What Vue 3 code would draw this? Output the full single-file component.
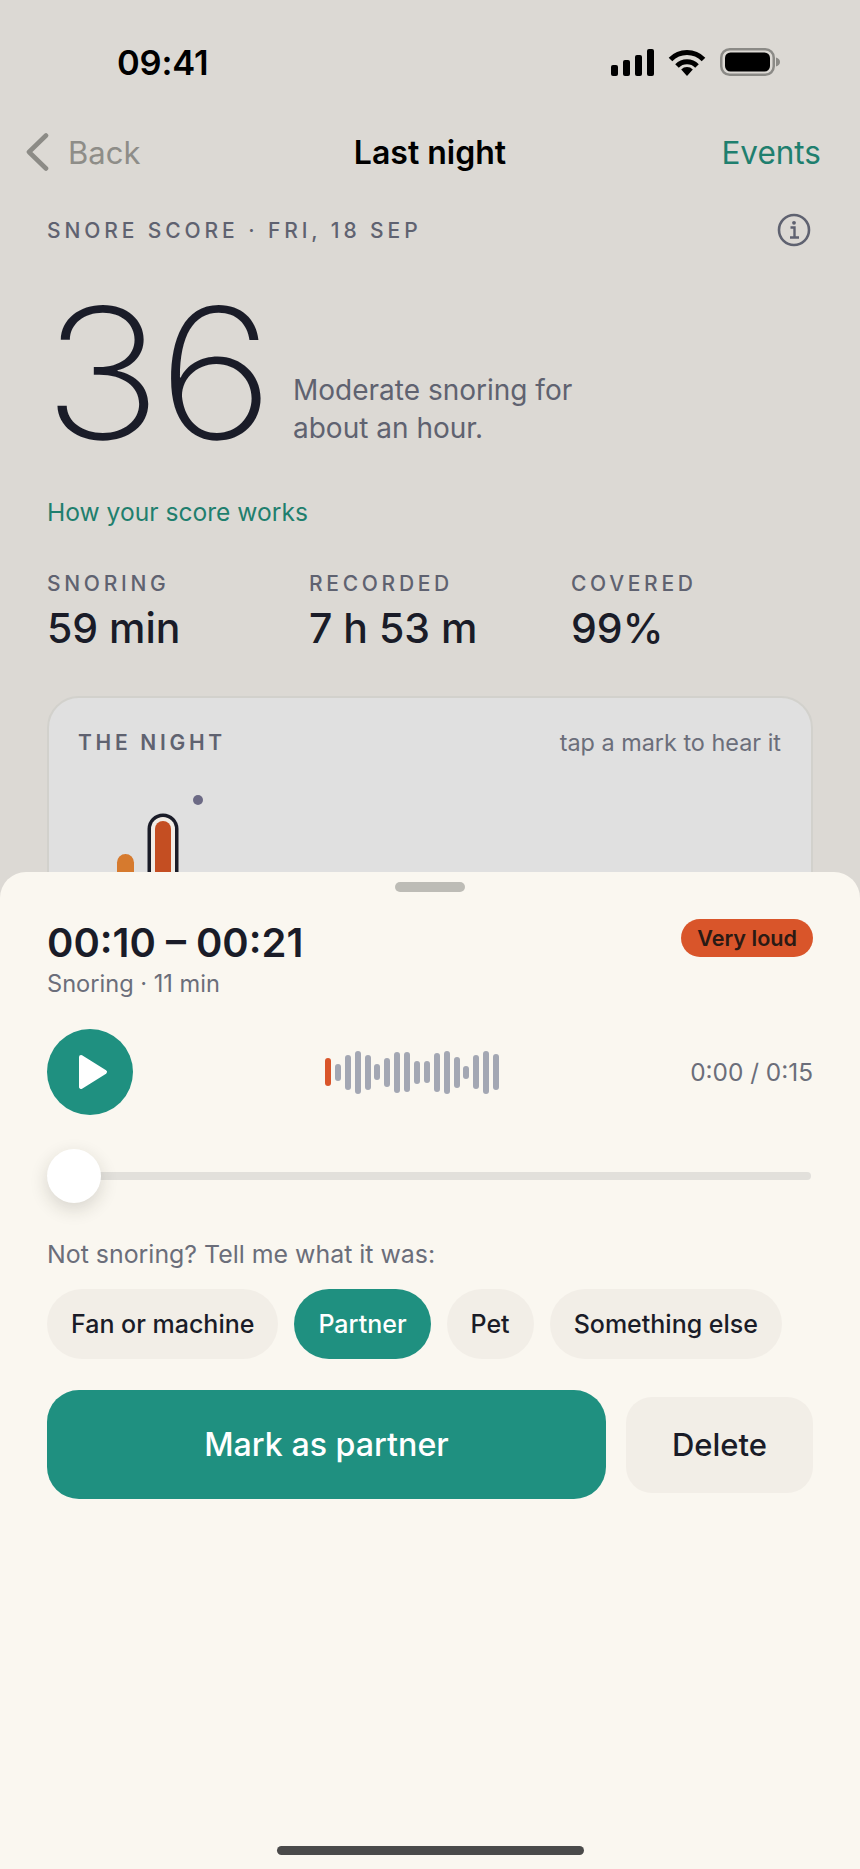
<script setup>
const stats = [
  { label: 'SNORING', value: '59 min' },
  { label: 'RECORDED', value: '7 h 53 m' },
  { label: 'COVERED', value: '99%' }
]

const signal = [11, 16, 21, 27]

// marks on the night timeline, in px from the chart's top-left corner
const marks = [
  { id: 'a', kind: 'bar-medium', left: 39, top: 44, width: 17, height: 90 },
  { id: 'b', kind: 'bar-loud', left: 77, top: 11, width: 16, height: 120 }
]

const wave = [28, 17, 35, 43, 35, 16, 29, 41, 40, 23, 22, 39, 43, 31, 13, 34, 43, 36]

const chips = [
  { label: 'Fan or machine' },
  { label: 'Partner', active: true },
  { label: 'Pet' },
  { label: 'Something else' }
]
</script>

<template>
  <div class="page">
    <div class="status">
      <span class="clock">09:41</span>
      <div class="status-icons">
        <div class="signal">
          <i v-for="h in signal" :key="h" :style="{ height: h + 'px' }"></i>
        </div>
        <svg width="38" height="27" viewBox="0 0 38 27" fill="none">
          <path d="M2.5 10.5A23 23 0 0 1 35.5 10.5" stroke="#000" stroke-width="5" />
          <path d="M9 17A14 14 0 0 1 29 17" stroke="#000" stroke-width="5" />
          <path d="M13.2 20.5A8 8 0 0 1 24.8 20.5L19 27Z" fill="#000" />
        </svg>
        <svg width="60" height="28" viewBox="0 0 60 28" fill="none">
          <rect x="1.25" y="1.25" width="52.5" height="25.5" rx="8.5" stroke="#8b8a86" stroke-width="2.5" />
          <rect x="5" y="4.5" width="45" height="19" rx="5.5" fill="#000" />
          <path d="M56 9.5C58.5 10.3 60 12 60 14S58.5 17.7 56 18.5Z" fill="#8b8a86" />
        </svg>
      </div>
    </div>

    <div class="nav">
      <div class="nav-back">
        <svg width="24" height="38" viewBox="0 0 24 38" fill="none">
          <path d="M21 2.5L4 19L21 35.5" stroke="#8c8b86" stroke-width="4.6" stroke-linecap="round" stroke-linejoin="round" />
        </svg>
        <span>Back</span>
      </div>
      <div class="nav-title">Last night</div>
      <div class="nav-action">Events</div>
    </div>

    <div class="content">
      <div class="eyebrow-row">
        <span class="eyebrow">SNORE SCORE · FRI, 18 SEP</span>
        <svg width="34" height="34" viewBox="0 0 34 34" fill="none">
          <circle cx="17" cy="17" r="15" stroke="#5f6270" stroke-width="2.6" />
          <path d="M13.5 14.5H17.5V24M13 24.5H22" stroke="#5f6270" stroke-width="2.4" />
          <circle cx="17" cy="9.8" r="1.9" fill="#5f6270" />
        </svg>
      </div>

      <div class="score-row">
        <div class="score">36</div>
        <p class="score-note">Moderate snoring for<br />about an hour.</p>
      </div>

      <div class="link">How your score works</div>

      <div class="stats">
        <div v-for="s in stats" :key="s.label" class="stat">
          <div class="stat-label">{{ s.label }}</div>
          <div class="stat-value">{{ s.value }}</div>
        </div>
      </div>

      <div class="card">
        <div class="card-head">
          <span class="card-title">THE NIGHT</span>
          <span class="card-hint">tap a mark to hear it</span>
        </div>
        <div class="chart">
          <span class="dot"></span>
          <span
            v-for="m in marks"
            :key="m.id"
            :class="['mark', m.kind]"
            :style="{ left: m.left + 'px', top: m.top + 'px', width: m.width + 'px', height: m.height + 'px' }"
          ></span>
        </div>
      </div>
    </div>

    <div class="sheet">
      <div class="handle"></div>

      <div class="sheet-head">
        <div>
          <div class="range">00:10 – 00:21</div>
          <div class="range-sub">Snoring · 11 min</div>
        </div>
        <span class="badge">Very loud</span>
      </div>

      <div class="player">
        <button class="play">
          <svg width="30" height="36" viewBox="0 0 30 36">
            <path d="M3 3L27 18L3 33Z" fill="#fff" stroke="#fff" stroke-width="4" stroke-linejoin="round" />
          </svg>
        </button>
        <div class="wave">
          <i v-for="(h, i) in wave" :key="i" :class="{ played: i === 0 }" :style="{ height: h + 'px' }"></i>
        </div>
        <span class="elapsed">0:00 / 0:15</span>
      </div>

      <div class="slider">
        <div class="thumb"></div>
        <div class="track"></div>
      </div>

      <div class="ask">Not snoring? Tell me what it was:</div>

      <div class="chips">
        <span v-for="c in chips" :key="c.label" :class="['chip', { 'chip-on': c.active }]">{{ c.label }}</span>
      </div>

      <div class="actions">
        <button class="btn-main">Mark as partner</button>
        <button class="btn-delete">Delete</button>
      </div>

      <div class="home-bar"></div>
    </div>
  </div>
</template>

<style>
html,
body {
  margin: 0;
  background: #dcd9d4;
}
</style>

<style scoped>
.page {
  position: relative;
  width: 860px;
  height: 1869px;
  overflow: hidden;
  background: #dcd9d4;
  font-family: Inter, "Liberation Sans", sans-serif;
  color: #1a1c28;
}

.status {
  display: flex;
  justify-content: space-between;
  align-items: center;
  height: 28px;
  padding: 48px 80px 0 117px;
}
.clock {
  font-size: 34.5px;
  font-weight: 600;
  color: #000;
  letter-spacing: -0.2px;
}
.status-icons {
  display: flex;
  align-items: center;
  gap: 14px;
}
.signal {
  display: flex;
  align-items: flex-end;
  gap: 5px;
  height: 27px;
}
.signal i {
  width: 7px;
  background: #000;
  border-radius: 2px;
}

.nav {
  position: relative;
  display: flex;
  justify-content: space-between;
  align-items: center;
  height: 40px;
  padding: 56px 39px 0 25px;
  font-size: 31px;
}
.nav-back {
  display: flex;
  align-items: center;
  gap: 19px;
  color: #8e8d88;
}
.nav-title {
  position: absolute;
  left: 0;
  right: 0;
  text-align: center;
  font-size: 32px;
  font-weight: 600;
  color: #000;
  pointer-events: none;
}
.nav-action {
  font-size: 31.5px;
  color: #1f7f6e;
}

.content {
  padding: 0 47px;
}
.eyebrow-row {
  display: flex;
  justify-content: space-between;
  align-items: center;
  height: 34px;
  margin-top: 41px;
  padding-right: 2px;
}
.eyebrow {
  font-size: 21px;
  font-weight: 500;
  letter-spacing: 3.9px;
  color: #5f6270;
}

.score-row {
  display: flex;
  align-items: flex-end;
  gap: 30px;
  height: 172px;
  margin-top: 36px;
}
.score {
  flex: 0 0 220px;
  margin: 0 0 -4px -4px;
  font-size: 182px;
  line-height: 172px;
  font-weight: 150;
  letter-spacing: -4px;
  color: #1a1c28;
  transform: scaleX(1.1);
  transform-origin: left center;
}
.score-note {
  margin: 0 0 8px;
  font-size: 28px;
  line-height: 38px;
  color: #5f6270;
}

.link {
  margin-top: 41px;
  font-size: 24.6px;
  line-height: 32px;
  color: #1f7f6e;
}

.stats {
  display: grid;
  grid-template-columns: 262px 262px 1fr;
  margin-top: 43px;
}
.stat-label {
  font-size: 21px;
  line-height: 26px;
  font-weight: 500;
  letter-spacing: 3.7px;
  color: #5f6270;
}
.stat-value {
  margin-top: 6px;
  font-size: 41px;
  line-height: 50px;
  font-weight: 500;
  color: #1a1c28;
}

.card {
  margin-top: 43px;
  height: 400px;
  padding: 29px 30px 0 29px;
  background: #e0e0e0;
  border: 2px solid #d2d1cc;
  border-radius: 32px;
  box-sizing: border-box;
}
.card-head {
  display: flex;
  justify-content: space-between;
  align-items: center;
  height: 30px;
}
.card-title {
  font-size: 21px;
  font-weight: 600;
  letter-spacing: 3.7px;
  color: #5f6270;
}
.card-hint {
  font-size: 23.4px;
  color: #6b6e7a;
}
.chart {
  position: relative;
  height: 120px;
  margin-top: 53px;
}
.dot {
  position: absolute;
  left: 115px;
  top: -15px;
  width: 10px;
  height: 10px;
  border-radius: 50%;
  background: #6c6a85;
}
.mark {
  position: absolute;
  border-radius: 9px;
}
.bar-medium {
  background: #d67a2e;
}
.bar-loud {
  background: #c44e22;
  box-shadow: 0 0 0 4px #f2ede6, 0 0 0 7.5px #1a1c28;
}

.sheet {
  position: absolute;
  left: 0;
  right: 0;
  top: 872px;
  bottom: 0;
  padding: 0 47px;
  background: #faf7f0;
  border-radius: 26px 26px 0 0;
}
.handle {
  width: 70px;
  height: 10px;
  margin: 10px auto 0;
  border-radius: 5px;
  background: #bdbcb6;
}

.sheet-head {
  display: flex;
  justify-content: space-between;
  align-items: flex-start;
  margin-top: 26px;
}
.range {
  font-size: 40px;
  line-height: 50px;
  font-weight: 600;
  color: #1a1c28;
}
.range-sub {
  margin-top: 1px;
  font-size: 23.6px;
  line-height: 30px;
  color: #6b6e7a;
}
.badge {
  display: flex;
  align-items: center;
  height: 38px;
  margin-top: 1px;
  padding: 0 16px;
  border-radius: 19px;
  background: #d9552a;
  color: #2a1a14;
  font-size: 21.6px;
  font-weight: 600;
}

.player {
  display: flex;
  justify-content: space-between;
  align-items: center;
  margin-top: 30px;
}
.play {
  display: flex;
  align-items: center;
  justify-content: center;
  width: 86px;
  height: 86px;
  padding: 0 0 0 6px;
  border: none;
  border-radius: 50%;
  background: #1f9080;
}
.wave {
  display: flex;
  align-items: center;
  gap: 3.9px;
  height: 44px;
  margin-right: -1px;
}
.wave i {
  width: 6px;
  border-radius: 3px;
  background: #a3a7b3;
}
.wave i.played {
  background: #d9552a;
}
.elapsed {
  font-size: 24.4px;
  color: #6b6e7a;
}

.slider {
  position: relative;
  display: flex;
  align-items: center;
  height: 54px;
  margin: 34px 2px 0 0;
}
.thumb {
  position: absolute;
  left: 0;
  top: 0;
  width: 54px;
  height: 54px;
  border-radius: 50%;
  background: #fff;
  box-shadow: 0 6px 18px rgba(40, 35, 25, 0.16);
}
.track {
  width: 100%;
  height: 8px;
  border-radius: 4px;
  background: #e2e0db;
}

.ask {
  margin-top: 35px;
  font-size: 24.9px;
  line-height: 32px;
  color: #6b6e7a;
}

.chips {
  display: flex;
  gap: 16px;
  margin-top: 19px;
}
.chip {
  display: flex;
  align-items: center;
  height: 70px;
  padding: 0 24px;
  border-radius: 35px;
  background: #f2eee7;
  font-size: 25px;
  font-weight: 500;
  color: #1a1c28;
}
.chip-on {
  background: #1f9080;
  color: #fff;
}

.actions {
  display: flex;
  align-items: center;
  gap: 20px;
  margin-top: 31px;
}
.btn-main,
.btn-delete {
  border: none;
  font-family: inherit;
  font-weight: 500;
}
.btn-main {
  width: 559px;
  height: 109px;
  border-radius: 32px;
  background: #1f9080;
  color: #fff;
  font-size: 32.2px;
}
.btn-delete {
  width: 187px;
  height: 96px;
  border-radius: 26px;
  background: #f2eee7;
  color: #1a1c28;
  font-size: 31px;
}

.home-bar {
  position: absolute;
  left: 277px;
  bottom: 14px;
  width: 307px;
  height: 9px;
  border-radius: 5px;
  background: #4a4a4a;
}
</style>
